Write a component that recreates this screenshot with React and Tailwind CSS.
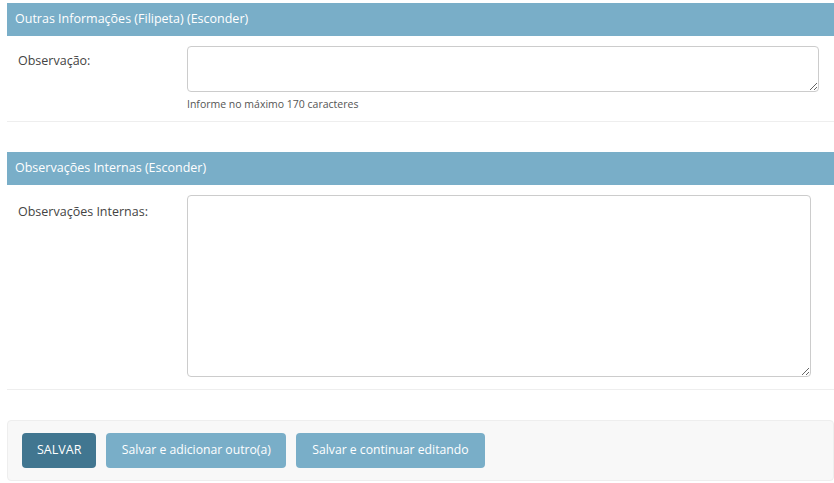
export default function App() {
  return (
    <div className="min-h-[483px] bg-white pl-[7px] pt-[3px] text-[13px] text-[#333]" style={{ fontFamily: '"Open Sans", "Noto Sans", sans-serif' }}>
      <fieldset>
        <h2 className="flex h-[33px] items-center bg-[#79aec8] px-2 text-[12.5px] text-white">
          Outras Informações (Filipeta) (Esconder)
        </h2>
        <div className="flex border-b border-[#eee] pb-[8px] pt-[10px]">
          <label className="w-[180px] shrink-0 pl-[11px] pt-[6px] text-[12.5px] text-[#444]">Observação:</label>
          <div>
            <textarea className="block h-[46px] w-[632px] rounded border border-[#ccc] bg-white" />
            <p className="mt-[5px] text-[10.5px] text-[#555]">Informe no máximo 170 caracteres</p>
          </div>
        </div>
      </fieldset>

      <fieldset className="mt-[30px]">
        <h2 className="flex h-[33px] items-center bg-[#79aec8] px-2 text-[12.5px] text-white">
          Observações Internas (Esconder)
        </h2>
        <div className="flex border-b border-[#eee] pb-[12px] pt-[10px]">
          <label className="w-[180px] shrink-0 pl-[11px] pt-[8px] text-[12.5px] text-[#444]">Observações Internas:</label>
          <textarea className="block h-[182px] w-[624px] rounded border border-[#ccc] bg-white" />
        </div>
      </fieldset>

      <div className="mt-[30px] flex h-[61px] items-center gap-[10px] rounded border border-[#eee] bg-[#f8f8f8] px-[14px]">
        <button className="h-[35px] rounded bg-[#417690] px-[15px] text-[12.5px] text-white">SALVAR</button>
        <button className="h-[35px] rounded bg-[#79aec8] px-[15.5px] text-[12.2px] text-white">Salvar e adicionar outro(a)</button>
        <button className="h-[35px] rounded bg-[#79aec8] px-[16px] text-[12.2px] text-white">Salvar e continuar editando</button>
      </div>
    </div>
  );
}
